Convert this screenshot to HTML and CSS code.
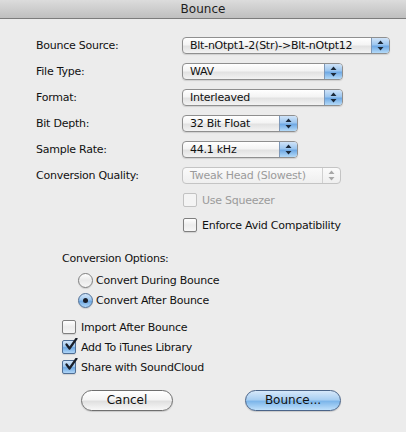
FILE: index.html
```html
<!DOCTYPE html>
<html>
<head>
<meta charset="utf-8">
<link rel="stylesheet" href="styles.css">
</head>
<body>
<div class="titlebar">Bounce</div>
<div class="content">
  <div class="grid">
    <div class="label">Bounce Source:</div>
    <div class="popup w-source"><span class="val">Blt-nOtpt1-2(Str)-&gt;Blt-nOtpt12</span><span class="cap"><svg width="7" height="11" viewBox="0 0 7 11"><path d="M3.5 0.5 L6.5 4 L0.5 4 Z M3.5 10.5 L6.5 7 L0.5 7 Z" fill="#1c2a3a"/></svg></span></div>
    <div class="label">File Type:</div>
    <div class="popup w-long"><span class="val">WAV</span><span class="cap"><svg width="7" height="11" viewBox="0 0 7 11"><path d="M3.5 0.5 L6.5 4 L0.5 4 Z M3.5 10.5 L6.5 7 L0.5 7 Z" fill="#1c2a3a"/></svg></span></div>
    <div class="label">Format:</div>
    <div class="popup w-long"><span class="val">Interleaved</span><span class="cap"><svg width="7" height="11" viewBox="0 0 7 11"><path d="M3.5 0.5 L6.5 4 L0.5 4 Z M3.5 10.5 L6.5 7 L0.5 7 Z" fill="#1c2a3a"/></svg></span></div>
    <div class="label">Bit Depth:</div>
    <div class="popup w-short"><span class="val">32 Bit Float</span><span class="cap"><svg width="7" height="11" viewBox="0 0 7 11"><path d="M3.5 0.5 L6.5 4 L0.5 4 Z M3.5 10.5 L6.5 7 L0.5 7 Z" fill="#1c2a3a"/></svg></span></div>
    <div class="label">Sample Rate:</div>
    <div class="popup w-short"><span class="val">44.1 kHz</span><span class="cap"><svg width="7" height="11" viewBox="0 0 7 11"><path d="M3.5 0.5 L6.5 4 L0.5 4 Z M3.5 10.5 L6.5 7 L0.5 7 Z" fill="#1c2a3a"/></svg></span></div>
    <div class="label">Conversion Quality:</div>
    <div class="popup w-quality disabled"><span class="val">Tweak Head (Slowest)</span><span class="cap"><svg width="7" height="11" viewBox="0 0 7 11"><path d="M3.5 0.5 L6.5 4 L0.5 4 Z M3.5 10.5 L6.5 7 L0.5 7 Z" fill="#a8a8a8"/></svg></span></div>
  </div>

  <div class="sub-checks">
    <div class="row disabled"><span class="box"></span><span>Use Squeezer</span></div>
    <div class="row"><span class="box"></span><span>Enforce Avid Compatibility</span></div>
  </div>

  <div class="options">
    <div class="row heading">Conversion Options:</div>
    <div class="radios">
      <div class="row"><span class="radio"></span><span>Convert During Bounce</span></div>
      <div class="row"><span class="radio on"></span><span>Convert After Bounce</span></div>
    </div>
    <div class="checks">
      <div class="row"><span class="box"></span><span>Import After Bounce</span></div>
      <div class="row"><span class="box on"><svg width="14" height="14" viewBox="0 0 14 14"><path d="M2.5 6.5 L5.5 10.5 L12.5 0.5" fill="none" stroke="#1a1f2a" stroke-width="2.2" stroke-linecap="round" stroke-linejoin="round"/></svg></span><span>Add To iTunes Library</span></div>
      <div class="row"><span class="box on"><svg width="14" height="14" viewBox="0 0 14 14"><path d="M2.5 6.5 L5.5 10.5 L12.5 0.5" fill="none" stroke="#1a1f2a" stroke-width="2.2" stroke-linecap="round" stroke-linejoin="round"/></svg></span><span>Share with SoundCloud</span></div>
    </div>
  </div>

  <div class="buttons">
    <div class="btn">Cancel</div>
    <div class="btn default">Bounce...</div>
  </div>
</div>
</body>
</html>
```

FILE: styles.css
```css
html, body {
  margin: 0;
  padding: 0;
}
body {
  width: 406px;
  height: 432px;
  background: #ececec;
  font-family: "DejaVu Sans", Verdana, sans-serif;
  font-size: 11px;
  letter-spacing: -0.25px;
  color: #111;
  overflow: hidden;
}
.titlebar {
  height: 18px;
  line-height: 18px;
  text-align: center;
  font-size: 12px;
  letter-spacing: 0;
  color: #1e1e1e;
  background: linear-gradient(#dcdcdc, #bfbfbf);
  border-bottom: 1px solid #7c7c7c;
}
.content {
  padding-top: 16px;
}
.grid {
  display: grid;
  grid-template-columns: 146px auto;
  grid-auto-rows: 20px;
  row-gap: 6px;
  padding-left: 36px;
  align-items: center;
}
.label {
  white-space: nowrap;
}
.popup {
  height: 17px;
  box-sizing: border-box;
  border: 1px solid #8f8f8f;
  border-radius: 4px;
  background: linear-gradient(#ffffff 0%, #f4f4f4 45%, #e2e2e2 55%, #f3f3f3 100%);
  display: flex;
  align-items: center;
  justify-content: space-between;
  overflow: hidden;
  box-shadow: 0 1px 1px rgba(0,0,0,0.12);
}
.popup .val {
  padding-left: 7px;
  white-space: nowrap;
}
.popup .cap {
  width: 17px;
  height: 100%;
  display: flex;
  align-items: center;
  justify-content: center;
  border-left: 1px solid #7e98b8;
  background: linear-gradient(#cfe3f8 0%, #9cc6ef 45%, #6fa9e4 55%, #b4daf8 100%);
}
.w-source { width: 208px; }
.w-long { width: 161px; }
.w-short { width: 116px; }
.w-quality { width: 159px; }
.popup.disabled {
  border-color: #c4c4c4;
  background: linear-gradient(#fafafa, #efefef);
  color: #9b9b9b;
  box-shadow: none;
}
.popup.disabled .cap {
  background: transparent;
  border-left: 1px solid #d0d0d0;
}
.row {
  height: 20px;
  display: flex;
  align-items: center;
  white-space: nowrap;
}
.row.disabled {
  color: #9b9b9b;
}
.sub-checks {
  margin-top: 5px;
  padding-left: 183px;
  display: flex;
  flex-direction: column;
  gap: 5px;
}
.box {
  width: 14px;
  height: 14px;
  box-sizing: border-box;
  border: 1px solid #7f7f7f;
  border-radius: 2px;
  background: linear-gradient(#ffffff, #ececec 50%, #f6f6f6);
  margin-right: 5px;
  flex: none;
  position: relative;
  box-shadow: 0 1px 1px rgba(0,0,0,0.12);
}
.row.disabled .box {
  border-color: #c2c2c2;
  background: #f4f4f4;
  box-shadow: none;
}
.box.on {
  border-color: #4f6e94;
  background: linear-gradient(#d3e6f9 0%, #9ec8f0 45%, #6ea8e2 55%, #b0d6f7 100%);
}
.box.on svg {
  position: absolute;
  left: 1px;
  top: -3px;
}
.options {
  margin-top: 13px;
  padding-left: 62px;
}
.radios {
  margin-top: 2px;
  padding-left: 16px;
}
.radio {
  width: 15px;
  height: 15px;
  box-sizing: border-box;
  border: 1px solid #7f7f7f;
  border-radius: 50%;
  background: linear-gradient(#ffffff, #e9e9e9 50%, #f6f6f6);
  margin-right: 3px;
  flex: none;
  position: relative;
  box-shadow: 0 1px 1px rgba(0,0,0,0.12);
}
.radio.on {
  border-color: #4f6e94;
  background: linear-gradient(#d3e6f9 0%, #9ec8f0 45%, #6ea8e2 55%, #b0d6f7 100%);
}
.radio.on::after {
  content: "";
  position: absolute;
  left: 4px;
  top: 4px;
  width: 5px;
  height: 5px;
  border-radius: 50%;
  background: #1a1f2a;
}
.checks {
  margin-top: 7px;
}
.buttons {
  margin-top: 13px;
  display: flex;
  padding-left: 81px;
  gap: 72px;
}
.btn {
  width: 92px;
  height: 21px;
  box-sizing: border-box;
  border: 1px solid #6f6f6f;
  border-radius: 11px;
  background: linear-gradient(#ffffff 0%, #f4f4f4 45%, #e0e0e0 55%, #f8f8f8 100%);
  text-align: center;
  line-height: 19px;
  font-size: 12px;
  letter-spacing: 0;
  box-shadow: 0 1px 1px rgba(0,0,0,0.15);
}
.btn.default {
  width: 96px;
  border-color: #4a6488;
  background: linear-gradient(#d6e8fa 0%, #a9cff2 45%, #7db6ea 55%, #bfe0fb 100%);
}
```
